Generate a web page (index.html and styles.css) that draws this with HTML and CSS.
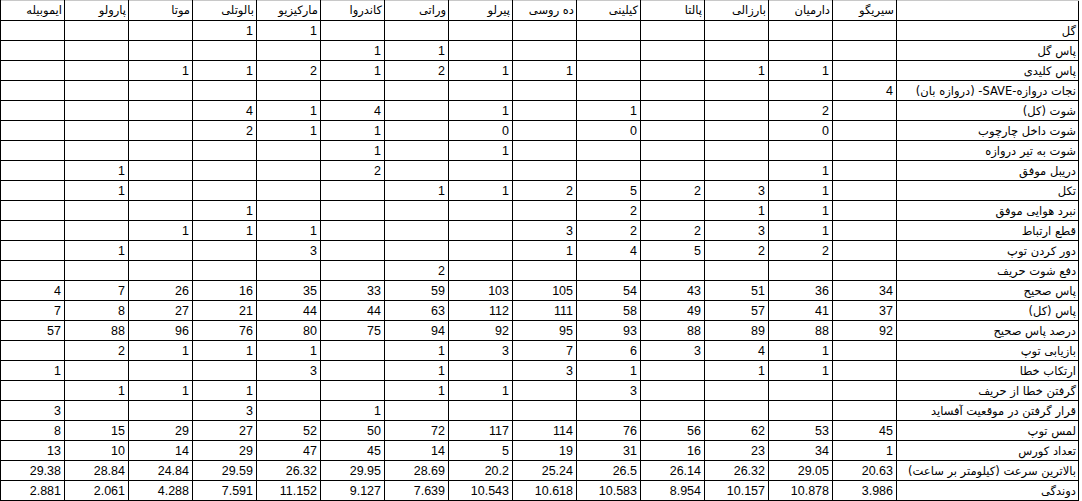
FILE: index.html
```html
<!DOCTYPE html>
<html lang="fa">
<head>
<meta charset="utf-8">
<title>آمار بازیکنان</title>
<link rel="stylesheet" href="styles.css">
</head>
<body>
<div class="sheet">
<table class="grid" dir="rtl">
<colgroup>
<col class="c-label">
<col class="c-num"><col class="c-num"><col class="c-num"><col class="c-num"><col class="c-num"><col class="c-num"><col class="c-num">
<col class="c-num"><col class="c-num"><col class="c-num"><col class="c-num"><col class="c-num"><col class="c-num"><col class="c-num">
</colgroup>
<thead>
<tr class="head"><th></th><th>سیریگو</th><th>دارمیان</th><th>بارزالی</th><th>پالتا</th><th>کیلینی</th><th>ده روسی</th><th>پیرلو</th><th>وراتی</th><th>کاندروا</th><th>مارکیزیو</th><th>بالوتلی</th><th>موتا</th><th>پارولو</th><th>ایموبیله</th></tr>
</thead>
<tbody>
<tr><th>گل</th><td></td><td></td><td></td><td></td><td></td><td></td><td></td><td></td><td></td><td>1</td><td>1</td><td></td><td></td><td></td></tr>
<tr><th>پاس گل</th><td></td><td></td><td></td><td></td><td></td><td></td><td></td><td>1</td><td>1</td><td></td><td></td><td></td><td></td><td></td></tr>
<tr><th>پاس کلیدی</th><td></td><td>1</td><td>1</td><td></td><td></td><td>1</td><td>1</td><td>2</td><td>1</td><td>2</td><td>1</td><td>1</td><td></td><td></td></tr>
<tr><th>نجات دروازه-SAVE- (دروازه بان)</th><td>4</td><td></td><td></td><td></td><td></td><td></td><td></td><td></td><td></td><td></td><td></td><td></td><td></td><td></td></tr>
<tr><th>شوت (کل)</th><td></td><td>2</td><td></td><td></td><td>1</td><td></td><td>1</td><td></td><td>4</td><td>1</td><td>4</td><td></td><td></td><td></td></tr>
<tr><th>شوت داخل چارچوب</th><td></td><td>0</td><td></td><td></td><td>0</td><td></td><td>0</td><td></td><td>1</td><td>1</td><td>2</td><td></td><td></td><td></td></tr>
<tr><th>شوت به تیر دروازه</th><td></td><td></td><td></td><td></td><td></td><td></td><td>1</td><td></td><td>1</td><td></td><td></td><td></td><td></td><td></td></tr>
<tr><th>دریبل موفق</th><td></td><td>1</td><td></td><td></td><td></td><td></td><td></td><td></td><td>2</td><td></td><td></td><td></td><td>1</td><td></td></tr>
<tr><th>تکل</th><td></td><td>1</td><td>3</td><td>2</td><td>5</td><td>2</td><td>1</td><td>1</td><td></td><td></td><td></td><td></td><td>1</td><td></td></tr>
<tr><th>نبرد هوایی موفق</th><td></td><td>1</td><td>1</td><td></td><td>2</td><td></td><td></td><td></td><td></td><td></td><td>1</td><td></td><td></td><td></td></tr>
<tr><th>قطع ارتباط</th><td></td><td>1</td><td>3</td><td>2</td><td>2</td><td>3</td><td></td><td></td><td></td><td>1</td><td>1</td><td>1</td><td></td><td></td></tr>
<tr><th>دور کردن توپ</th><td></td><td>2</td><td>2</td><td>5</td><td>4</td><td>1</td><td></td><td></td><td></td><td>3</td><td></td><td></td><td>1</td><td></td></tr>
<tr><th>دفع شوت حریف</th><td></td><td></td><td></td><td></td><td></td><td></td><td></td><td>2</td><td></td><td></td><td></td><td></td><td></td><td></td></tr>
<tr><th>پاس صحیح</th><td>34</td><td>36</td><td>51</td><td>43</td><td>54</td><td>105</td><td>103</td><td>59</td><td>33</td><td>35</td><td>16</td><td>26</td><td>7</td><td>4</td></tr>
<tr><th>پاس (کل)</th><td>37</td><td>41</td><td>57</td><td>49</td><td>58</td><td>111</td><td>112</td><td>63</td><td>44</td><td>44</td><td>21</td><td>27</td><td>8</td><td>7</td></tr>
<tr><th>درصد پاس صحیح</th><td>92</td><td>88</td><td>89</td><td>88</td><td>93</td><td>95</td><td>92</td><td>94</td><td>75</td><td>80</td><td>76</td><td>96</td><td>88</td><td>57</td></tr>
<tr><th>بازیابی توپ</th><td></td><td>1</td><td>4</td><td>3</td><td>6</td><td>7</td><td>3</td><td>1</td><td></td><td>1</td><td>1</td><td>1</td><td>2</td><td></td></tr>
<tr><th>ارتکاب خطا</th><td></td><td>1</td><td>1</td><td></td><td>1</td><td>3</td><td></td><td>1</td><td></td><td>3</td><td></td><td></td><td></td><td>1</td></tr>
<tr><th>گرفتن خطا از حریف</th><td></td><td></td><td></td><td></td><td>3</td><td></td><td>1</td><td>1</td><td></td><td></td><td>1</td><td>1</td><td>1</td><td></td></tr>
<tr><th>قرار گرفتن در موقعیت آفساید</th><td></td><td></td><td></td><td></td><td></td><td></td><td></td><td></td><td>1</td><td></td><td>3</td><td></td><td></td><td>3</td></tr>
<tr><th>لمس توپ</th><td>45</td><td>53</td><td>62</td><td>56</td><td>76</td><td>114</td><td>117</td><td>72</td><td>50</td><td>52</td><td>27</td><td>29</td><td>15</td><td>8</td></tr>
<tr><th>تعداد کورس</th><td>1</td><td>34</td><td>23</td><td>16</td><td>31</td><td>19</td><td>5</td><td>14</td><td>45</td><td>47</td><td>29</td><td>14</td><td>10</td><td>13</td></tr>
<tr><th>بالاترین سرعت (کیلومتر بر ساعت)</th><td>20.63</td><td>29.05</td><td>26.32</td><td>26.14</td><td>26.5</td><td>25.24</td><td>20.2</td><td>28.69</td><td>29.95</td><td>26.32</td><td>29.59</td><td>24.84</td><td>28.84</td><td>29.38</td></tr>
<tr><th>دوندگی</th><td>3.986</td><td>10.878</td><td>10.157</td><td>8.954</td><td>10.583</td><td>10.618</td><td>10.543</td><td>7.639</td><td>9.127</td><td>11.152</td><td>7.591</td><td>4.288</td><td>2.061</td><td>2.881</td></tr>
</tbody>
</table>
</div>
</body>
</html>
```
FILE: styles.css
```css
html, body {
  margin: 0;
  padding: 0;
  background: #ffffff;
}
.sheet {
  width: 1082px;
  height: 501px;
  overflow: hidden;
  background: #ffffff;
}
.grid {
  border-collapse: collapse;
  table-layout: fixed;
  width: 1079px;
  color: #000000;
}
.c-label { width: 182px; }
.c-num { width: 64px; }
.grid th,
.grid td {
  border: 1px solid #000000;
  height: 20px;
  padding: 0 3px 1px 2px;
  box-sizing: border-box;
  text-align: right;
  vertical-align: bottom;
  white-space: nowrap;
  overflow: hidden;
  font-weight: normal;
}
.grid td {
  font-family: "Liberation Sans", Arial, sans-serif;
  font-size: 12.5px;
  line-height: 16px;
  direction: ltr;
}
.grid th {
  font-family: "DejaVu Sans", sans-serif;
  font-size: 11.5px;
  line-height: 16px;
  padding-right: 2px;
}
.grid thead th {
  border-top-color: #c8c8c8;
  vertical-align: middle;
  padding-bottom: 2px;
}
```
